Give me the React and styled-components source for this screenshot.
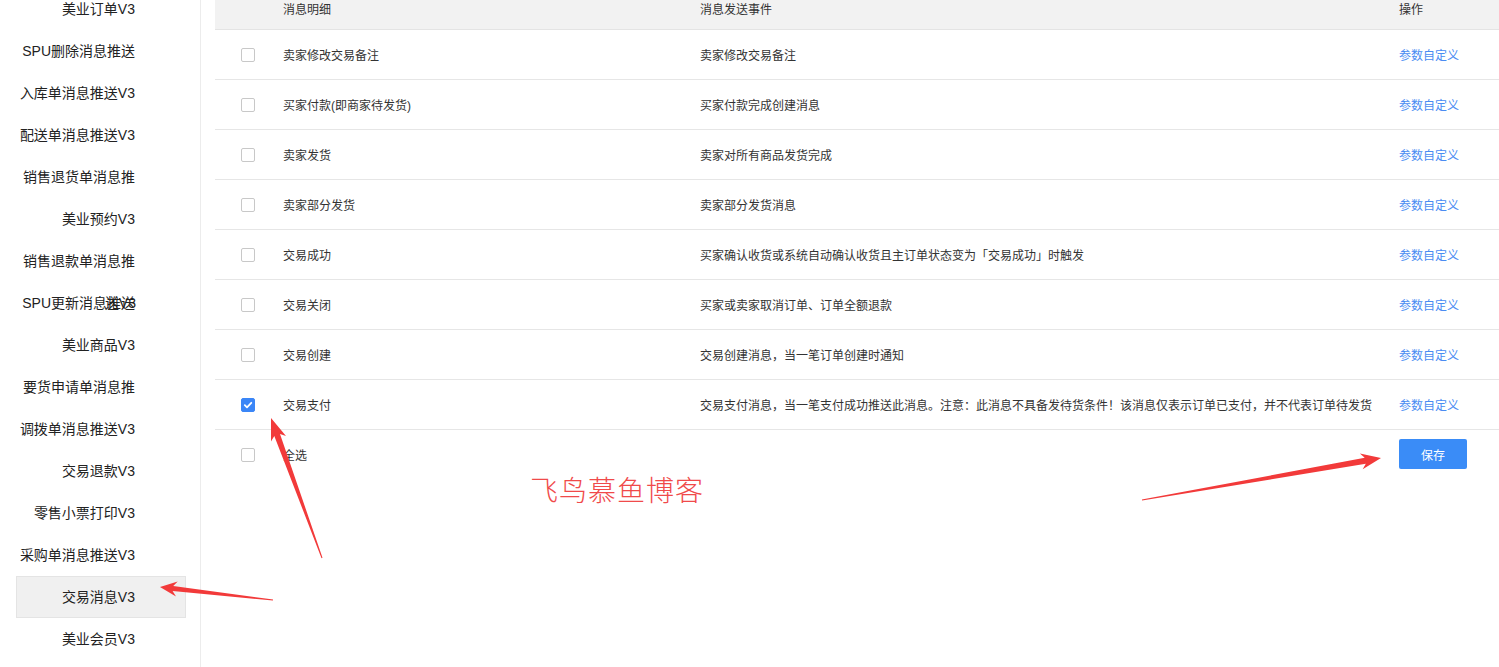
import React from 'react';
import styled, { createGlobalStyle, css } from 'styled-components';

const GlobalStyle = createGlobalStyle`
  html, body {
    margin: 0;
    padding: 0;
    background: #fff;
    font-family: "Liberation Sans", "Noto Sans CJK SC", sans-serif;
    color: #333;
  }
`

const menu = [
  '美业订单V3',
  'SPU删除消息推送',
  '入库单消息推送V3',
  '配送单消息推送V3',
  '销售退货单消息推送V3',
  '美业预约V3',
  '销售退款单消息推送V3',
  'SPU更新消息推送',
  '美业商品V3',
  '要货申请单消息推送V3',
  '调拨单消息推送V3',
  '交易退款V3',
  '零售小票打印V3',
  '采购单消息推送V3',
  '交易消息V3',
  '美业会员V3',
]

const rows = [
  { name: '卖家修改交易备注', event: '卖家修改交易备注' },
  { name: '买家付款(即商家待发货)', event: '买家付款完成创建消息' },
  { name: '卖家发货', event: '卖家对所有商品发货完成' },
  { name: '卖家部分发货', event: '卖家部分发货消息' },
  { name: '交易成功', event: '买家确认收货或系统自动确认收货且主订单状态变为「交易成功」时触发' },
  { name: '交易关闭', event: '买家或卖家取消订单、订单全额退款' },
  { name: '交易创建', event: '交易创建消息，当一笔订单创建时通知' },
  { name: '交易支付', event: '交易支付消息，当一笔支付成功推送此消息。注意：此消息不具备发待货条件！该消息仅表示订单已支付，并不代表订单待发货', checked: true },
]

// tapered annotation arrow, tail -> tip
const arrowPoints = (x1, y1, x2, y2, headLen, headW, shaftW) => {
  const dx = x2 - x1
  const dy = y2 - y1
  const len = Math.hypot(dx, dy)
  const ux = dx / len
  const uy = dy / len
  const nx = -uy
  const ny = ux
  const bx = x2 - ux * headLen
  const by = y2 - uy * headLen
  const sx = bx + ux * 4
  const sy = by + uy * 4
  const pts = [
    [x1 + nx * 0.5, y1 + ny * 0.5],
    [sx + nx * shaftW / 2, sy + ny * shaftW / 2],
    [bx + nx * headW / 2, by + ny * headW / 2],
    [x2, y2],
    [bx - nx * headW / 2, by - ny * headW / 2],
    [sx - nx * shaftW / 2, sy - ny * shaftW / 2],
    [x1 - nx * 0.5, y1 - ny * 0.5],
  ]
  return pts.map(p => p.map(v => v.toFixed(1)).join(',')).join(' ')
}

const arrows = [
  [322, 558, 271, 418, 22, 16, 6],
  [273, 600, 160, 587, 17, 15, 5],
  [1142, 500, 1381, 458, 20, 16, 6],
]

const CheckBox = ({ checked }) => (
  <Box checked={checked}>
    {checked && (
      <svg width="10" height="10" viewBox="0 0 10 10">
        <path d="M1.8 5.2 L4 7.3 L8.3 2.8" fill="none" stroke="#fff" strokeWidth="1.8" strokeLinecap="round" strokeLinejoin="round" />
      </svg>
    )}
  </Box>
)

export default function App() {
  return (
    <>
      <GlobalStyle />
      <Viewport>
        <Page>
          <Sidebar>
            {menu.map((item, i) => (
              <MenuItem key={i} active={item === '交易消息V3'}>
                {item}
                {item === 'SPU更新消息推送' && <Ghost>送V3</Ghost>}
              </MenuItem>
            ))}
          </Sidebar>
          <Content>
            <HeadRow>
              <Cell />
              <Cell>消息明细</Cell>
              <Cell>消息发送事件</Cell>
              <Cell>操作</Cell>
            </HeadRow>
            {rows.map((row, i) => (
              <Row key={i}>
                <CheckCell><CheckBox checked={row.checked} /></CheckCell>
                <Cell>{row.name}</Cell>
                <Cell>{row.event}</Cell>
                <Cell><Link>参数自定义</Link></Cell>
              </Row>
            ))}
            <Row last>
              <CheckCell><CheckBox /></CheckCell>
              <Cell>全选</Cell>
              <Cell />
              <Cell><SaveButton>保存</SaveButton></Cell>
            </Row>
          </Content>
        </Page>
        <Watermark>飞鸟慕鱼博客</Watermark>
        <Annotations width="1499" height="667">
          {arrows.map((a, i) => (
            <polygon key={i} points={arrowPoints(...a)} fill="#f23a3a" />
          ))}
        </Annotations>
      </Viewport>
    </>
  )
}

const Viewport = styled.div`
  position: relative;
  width: 1499px;
  height: 667px;
  overflow: hidden;
`
const Page = styled.div`
  display: flex;
  margin-top: -12px;
  height: 679px;
`
const Sidebar = styled.aside`
  width: 184px;
  flex-shrink: 0;
  padding-left: 16px;
  border-right: 1px solid #ececec;
`
const MenuItem = styled.div`
  position: relative;
  box-sizing: border-box;
  width: 170px;
  height: 42px;
  line-height: 40px;
  padding: 0 50px 0 0;
  text-align: right;
  font-size: 14px;
  color: #222;
  overflow: hidden;
  border: 1px solid transparent;
  ${p => p.active && css`
    background: #f0f0f0;
    border-color: #e4e4e4;
  `}
`
const Ghost = styled.span`
  position: absolute;
  right: 49px;
  top: 0;
  color: #222;
`
const Content = styled.main`
  flex: 1;
  margin-left: 14px;
  font-size: 12px;
`
const gridCols = css`
  display: grid;
  grid-template-columns: 68px 417px 699px 1fr;
  align-items: center;
`
const HeadRow = styled.div`
  ${gridCols};
  height: 41px;
  background: #f2f2f2;
  border-bottom: 1px solid #e4e4e4;
  color: #333;
`
const Row = styled.div`
  ${gridCols};
  height: 49px;
  border-bottom: 1px solid ${p => (p.last ? 'transparent' : '#e6e6e6')};
`
const Cell = styled.div`
  white-space: nowrap;
  color: #333;
  padding-bottom: 1px;
`
const CheckCell = styled.div`
  display: flex;
  padding-left: 26px;
`
const Box = styled.span`
  box-sizing: border-box;
  width: 14px;
  height: 14px;
  border-radius: 2px;
  border: 1px solid ${p => (p.checked ? '#3b86f7' : '#c8c8c8')};
  background: ${p => (p.checked ? '#3b86f7' : '#fff')};
  display: flex;
  align-items: center;
  justify-content: center;
`
const Link = styled.a`
  color: #4a8cf2;
  cursor: pointer;
`
const SaveButton = styled.button`
  width: 68px;
  height: 30px;
  border: none;
  border-radius: 2px;
  background: #3a8cf7;
  color: #fff;
  font-size: 12px;
  font-family: inherit;
  padding: 0;
  cursor: pointer;
`
const Watermark = styled.div`
  position: absolute;
  left: 530px;
  top: 469px;
  font-family: "Noto Sans CJK SC", sans-serif;
  font-weight: 300;
  font-size: 28px;
  letter-spacing: 1px;
  color: #f04a4a;
`
const Annotations = styled.svg`
  position: absolute;
  left: 0;
  top: 0;
  pointer-events: none;
`
